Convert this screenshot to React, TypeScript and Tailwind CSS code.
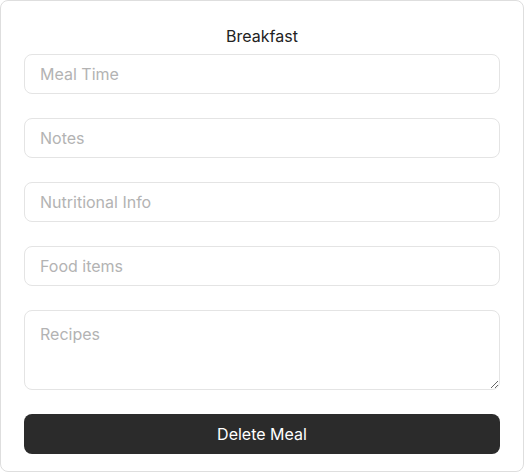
import { useState } from "react";

const fields = ["Meal Time", "Notes", "Nutritional Info", "Food items"];

export default function App() {
  const [values, setValues] = useState<Record<string, string>>({});

  return (
    <div className="w-[524px] h-[472px] bg-white font-['Inter',sans-serif]">
      <div className="flex flex-col h-full border border-[#dedede] rounded-lg px-[23px] pt-[23px] pb-[17px]">
        <h2 className="text-center text-base leading-6 text-[#222] mb-[6px]">Breakfast</h2>
        <div className="flex flex-col gap-6">
          {fields.map((f) => (
            <input
              key={f}
              placeholder={f}
              value={values[f] ?? ""}
              onChange={(e) => setValues({ ...values, [f]: e.target.value })}
              className="h-10 w-full rounded-lg border border-[#e4e4e4] px-[15px] text-base text-[#222] placeholder:text-[#b3b3b3] outline-none"
            />
          ))}
          <textarea
            placeholder="Recipes"
            className="h-20 w-full rounded-lg border border-[#e4e4e4] px-[15px] pt-[11px] text-base leading-6 text-[#222] placeholder:text-[#b3b3b3] outline-none"
          />
          <button className="h-10 w-full rounded-lg bg-[#2b2b2b] text-white text-base">
            Delete Meal
          </button>
        </div>
      </div>
    </div>
  );
}
